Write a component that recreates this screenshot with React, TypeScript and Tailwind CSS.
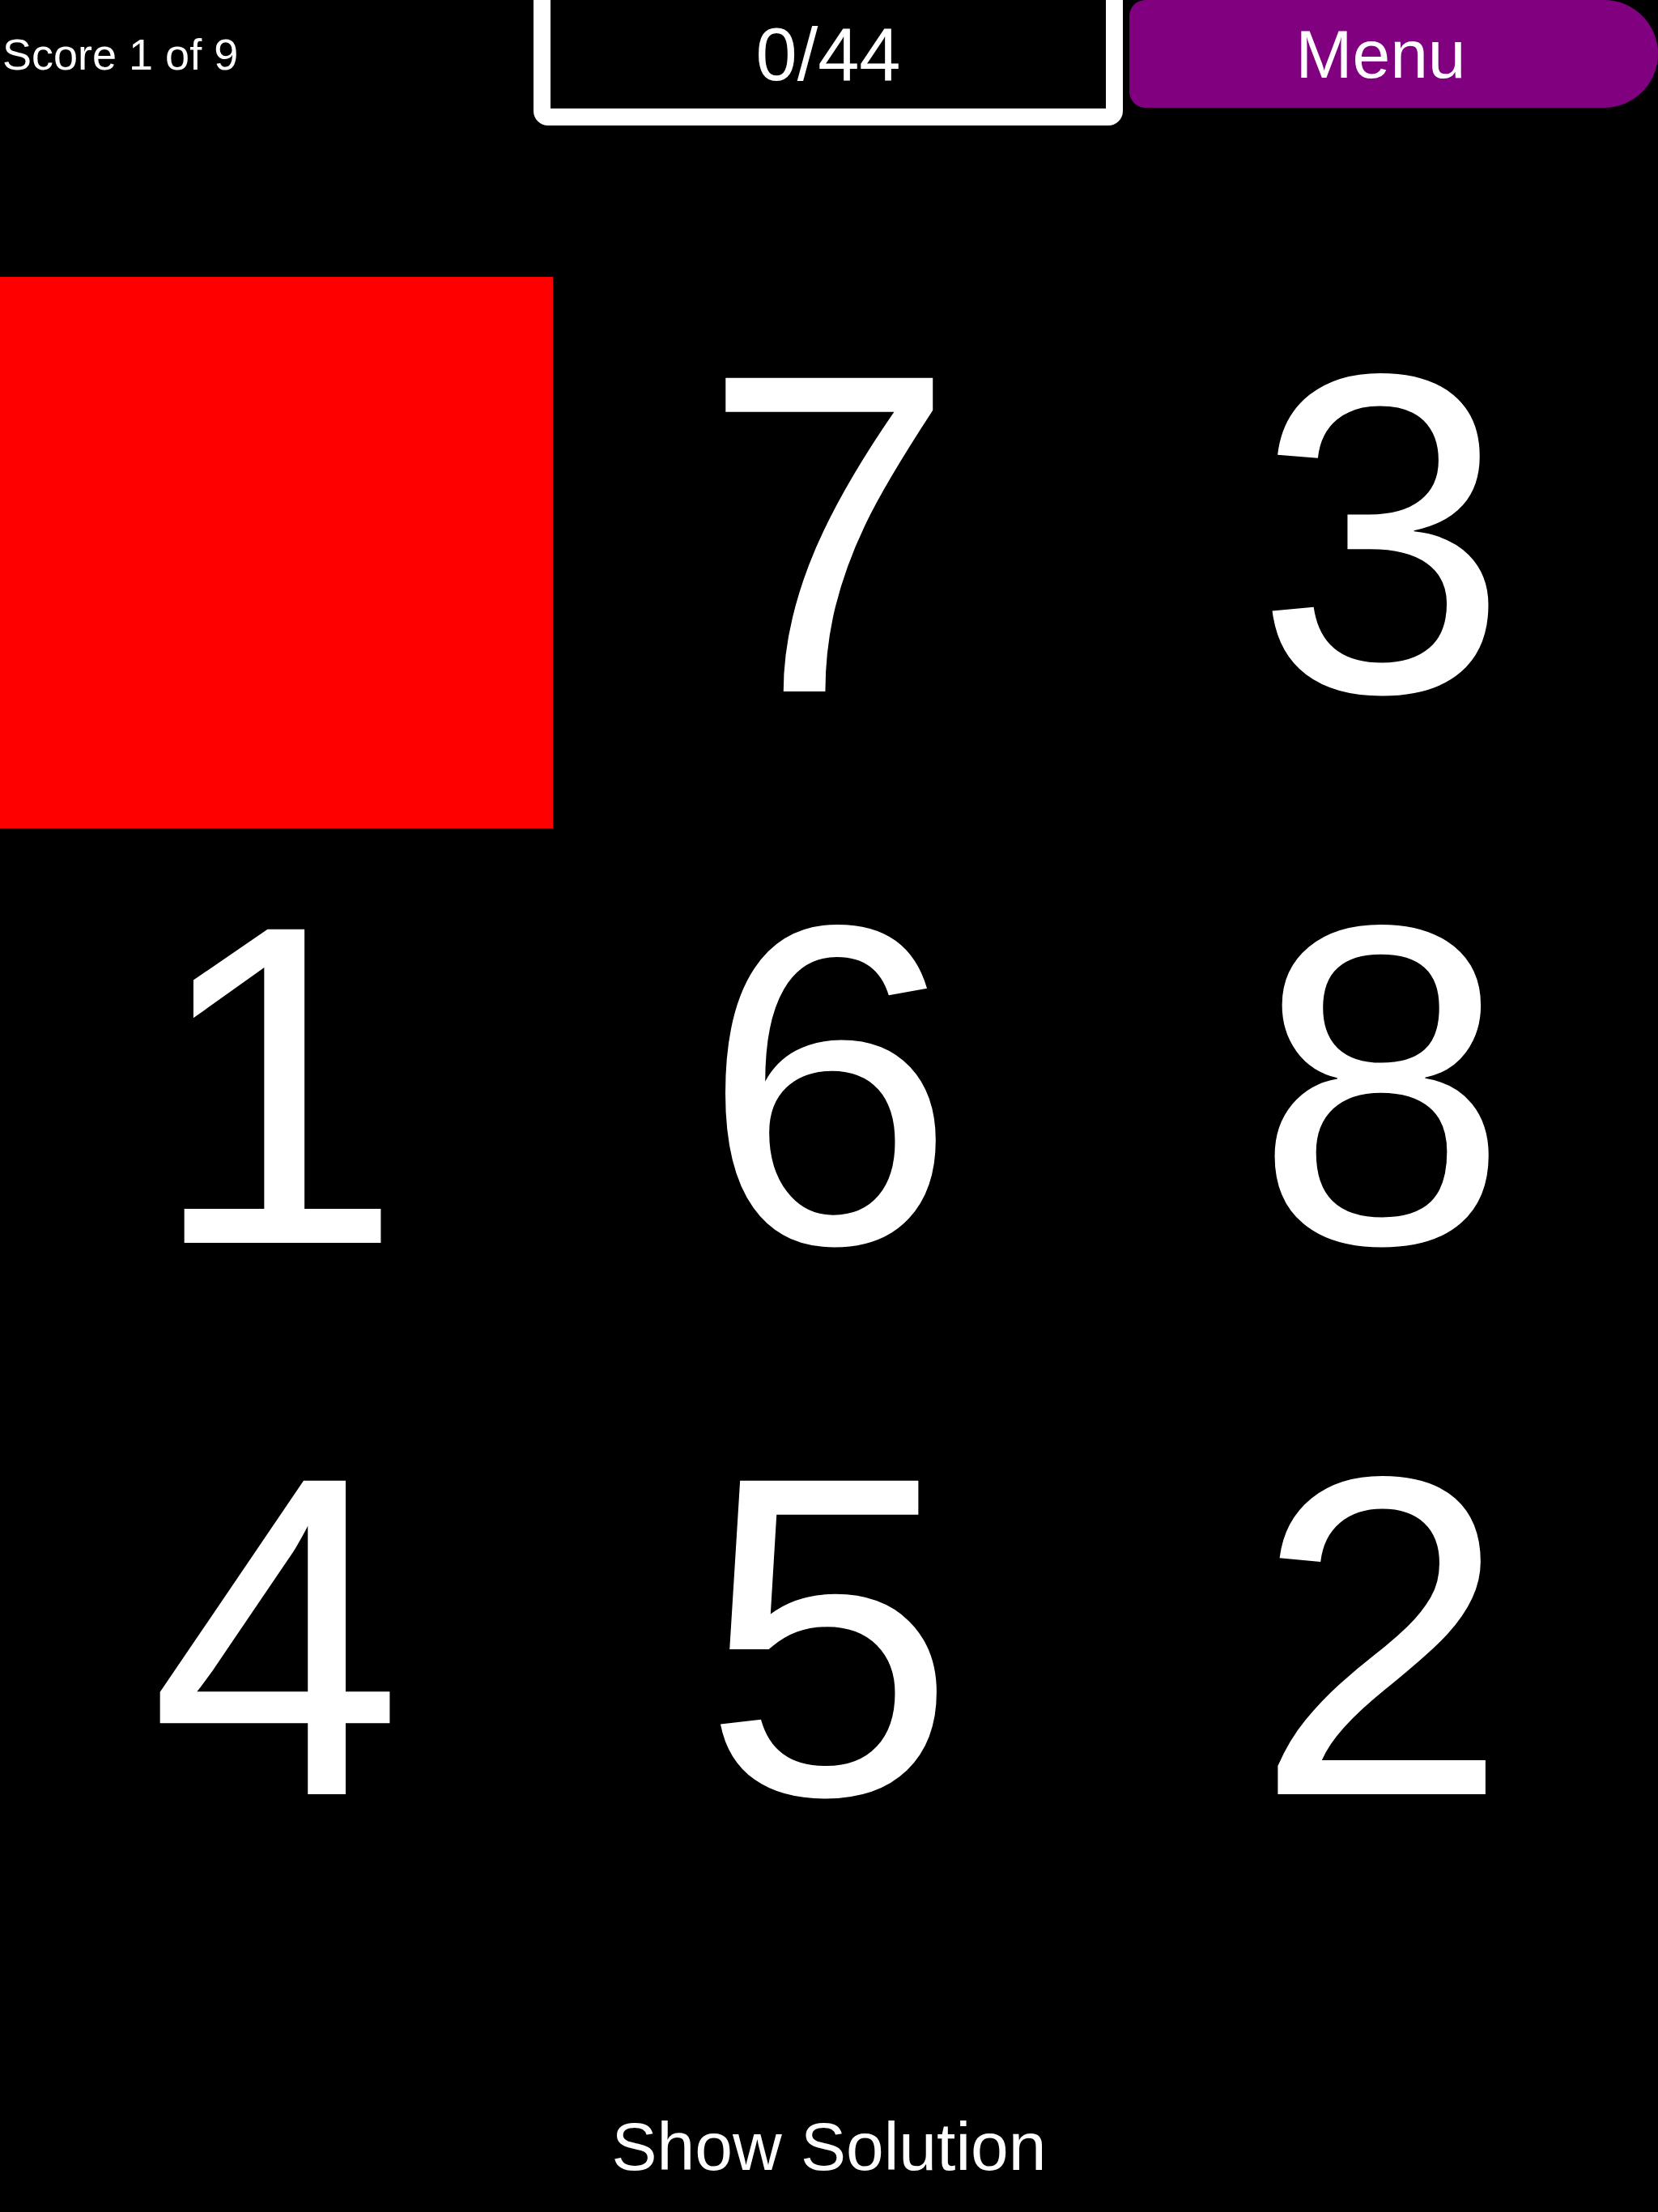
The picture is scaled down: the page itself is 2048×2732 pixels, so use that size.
import React from "react";

const cells: (number | null)[] = [null, 7, 3, 1, 6, 8, 4, 5, 2];

const App: React.FC = () => {
  return (
    <div className="min-h-[2732px] w-[2048px] overflow-hidden bg-black text-white font-['Liberation_Sans',Arial,sans-serif]">
      {/* top bar */}
      <div className="flex h-[155px] items-start">
        <div className="flex h-[133px] w-[659px] items-center pl-[3px] text-[54px] leading-none">
          Score 1 of 9
        </div>
        <div className="-mt-[22px] flex h-[177px] w-[728px] items-center justify-center rounded-b-[18px] border-[21px] border-white text-[92px] leading-none">
          0/44
        </div>
        <button className="ml-[8px] flex h-[133px] flex-1 items-center justify-center rounded-l-[20px] rounded-r-[67px] bg-[#800080] pr-[32px] text-[84px] leading-none text-white">
          Menu
        </button>
      </div>

      {/* board */}
      <div className="mt-[187px] grid grid-cols-3">
        {cells.map((n, i) =>
          n === null ? (
            <div key={i} className="h-[681px] bg-[#ff0000]" />
          ) : (
            <div
              key={i}
              className="flex h-[681px] items-center justify-center pb-[48px] text-[563px] leading-none"
            >
              {n}
            </div>
          )
        )}
      </div>

      <div className="flex h-[347px] justify-center pt-[185px]">
        <button className="text-[84px] leading-none text-white">Show Solution</button>
      </div>
    </div>
  );
};

export default App;
